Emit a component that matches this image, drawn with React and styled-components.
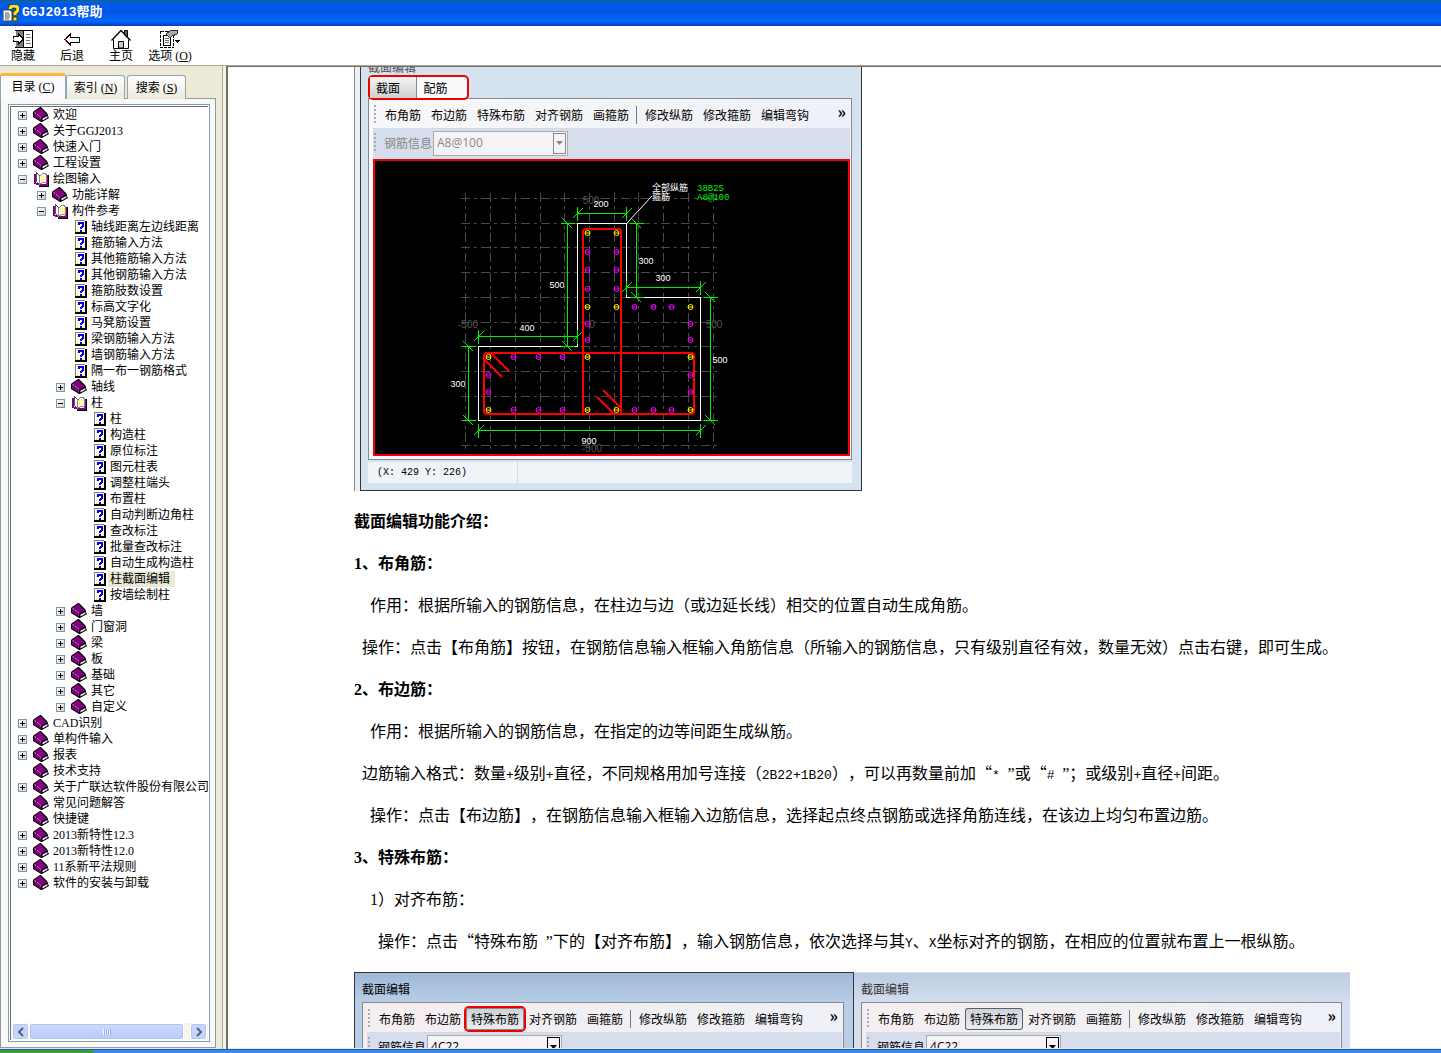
import { useId } from 'react'
import styled, { createGlobalStyle, css } from 'styled-components'

const GlobalStyle = createGlobalStyle`
  * {
    box-sizing: border-box;
  }
  body {
    margin: 0;
    background: #fff;
    color: #000;
    font-family: "Liberation Serif", "Noto Sans CJK SC", serif;
    font-size: 12px;
    line-height: 16px;
    text-spacing-trim: space-all;
  }
  button, select {
    margin: 0;
    padding: 0;
    border: none;
    background: none;
    color: inherit;
    font: inherit;
  }
  a {
    color: inherit;
    text-decoration: none;
  }
  svg {
    display: block;
    flex: none;
  }
`

/* ---------- icons ---------- */

const AppIcon = () => (
  <svg width="16" height="17" viewBox="0 0 16 17">
    <path d="M0 5h7l2 2v9H0z" fill="#fff" stroke="#444" />
    <path d="M2 8h4M2 10h5M2 12h5M2 14h4" stroke="#555" />
    <path d="M7 4q0-3 4-3t4 3q0 2-3 4v2" fill="none" stroke="#443c00" strokeWidth="5" />
    <path d="M7 4q0-3 4-3t4 3q0 2-3 4v2" fill="none" stroke="#ffe400" strokeWidth="3" />
    <rect x="10" y="12" width="4" height="4" fill="#ffe400" stroke="#443c00" />
  </svg>
)
const HideIcon = () => (
  <svg width="22" height="20" viewBox="0 0 22 20" shapeRendering="crispEdges">
    <path d="M3 1.5h17v17H3" fill="#fff" stroke="#000" />
    <path d="M4 2h7v16H4z" fill="#808080" />
    <path d="M11.500 1v18" stroke="#000" />
    <path d="M14 5.500h4M14 8.500h5M14 11.500h4M14 14.500h5" stroke="#777" />
    <path d="M1 7.500h5v-3l5.500 5.500L6 15.500v-3H1z" fill="#fff" stroke="#000" />
    <path d="M1 9h1v2H1z" fill="#00b0b0" />
  </svg>
)
const BackIcon = () => (
  <svg width="16" height="20" viewBox="0 0 16 20" shapeRendering="crispEdges">
    <path d="M1 10.500l5.500-5.500v3H15v5H6.500v3z" fill="#fff" stroke="#000" />
    <path d="M1 9h1v3H1z" fill="#e02020" />
  </svg>
)
const HomeIcon = () => (
  <svg width="20" height="20" viewBox="0 0 20 20">
    <path d="M13.500 1.500h3v7h-3z" fill="#666" stroke="#000" />
    <path d="M2.500 10.500L10 2.500l7.500 8v9h-15z" fill="#fff" />
    <path d="M2.500 10.500v9h15v-9" fill="none" stroke="#000" />
    <path d="M.5 11.500L10 1.500l9.500 10" fill="none" stroke="#000" strokeWidth="1.300" />
    <path d="M7.500 19v-6.500h5V19z" fill="#ccc" stroke="#000" />
  </svg>
)
const OptionsIcon = () => (
  <svg width="22" height="20" viewBox="0 0 22 20" shapeRendering="crispEdges">
    <path d="M1.500 2.500h13v16h-13z" fill="#fff" stroke="#000" strokeDasharray="3 1" />
    <path d="M4.500 6.500h7v10h-7z" fill="#fff" stroke="#000" />
    <path d="M6 9.500h4M6 11.500h4M6 13.500h4" stroke="#666" />
    <path d="M7 5l5-4h6v4l-5 2-2 2z" fill="#aaa" stroke="#333" />
    <path d="M16 11h5l-2.500 3z" fill="#000" />
  </svg>
)
const ClosedBook = () => (
  <svg width="17" height="16" viewBox="0 0 17 16">
    <path d="M7 0L8 0L14 6L15 8L15 9L16 11L9 15H8L0 10V5L1 4z" fill="#000" />
    <path d="M7 1L14 7.500L8.500 10.500L1 5z" fill="#800080" />
    <path d="M1 6l7 5v3L1 9.500z" fill="#800080" />
    <path d="M1.500 5.500L8.500 10.800" stroke="#e0c0e0" strokeDasharray="2 1" />
    <path d="M9.500 11.500L14.500 9V10.500L9.500 13.500z" fill="#fff" />
    <path d="M10.500 12.500l3.500-2" stroke="#999" strokeWidth=".6" />
  </svg>
)
const OpenBook = () => (
  <svg width="17" height="16" viewBox="0 0 17 16" shapeRendering="crispEdges">
    <path d="M2 3v9l5 2h7V4" fill="#fff" stroke="#800080" strokeWidth="2" />
    <path d="M3.500 1.500l3 3v9l-3-3z" fill="#fff" stroke="#555" />
    <path d="M6.500 5.500l3-3h2l2 1v8h-4l-3 2z" fill="#fff" stroke="#888" />
    <path d="M8.500 5v7M10.500 4v7M12.500 5v6" stroke="#ffee30" strokeDasharray="2 1" />
    <path d="M15.500 4v11H6" fill="none" stroke="#000" />
  </svg>
)
const TopicIcon = () => (
  <svg width="17" height="16" viewBox="-2 0 17 16" shapeRendering="crispEdges">
    <path d="M3 2h9v11H3z" fill="#fff" />
    <path d="M4.500 3v10M11.500 3v10M4 3.500h8M4 12.500h8" stroke="#ffec50" strokeDasharray="1 1" />
    <path d="M2.500 14V1.500H12" fill="none" stroke="#808080" />
    <path d="M13 2v12M2 14h12" fill="none" stroke="#000" strokeWidth="2" />
    <path d="M6 6V4h4v3L8 8.500V10" fill="none" stroke="#0000e0" strokeWidth="2" />
    <path d="M7 11h2v2H7z" fill="#0000e0" />
  </svg>
)
const Chevron = ({ flip }) => (
  <svg width="8" height="10" viewBox="0 0 8 10">
    <path
      d={flip ? 'M2 1l4 4-4 4' : 'M6 1L2 5l4 4'}
      fill="none"
      stroke="#4d6185"
      strokeWidth="2"
    />
  </svg>
)

/* ---------- section drawing ---------- */

const gridX = [465, 490, 515, 540, 564, 589, 614, 638, 663, 688, 713]
const gridY = [198, 223, 247, 272, 297, 322, 346, 371, 396, 420, 445]
const yellowBars = [
  [587, 233], [616, 233], [587, 307], [616, 307], [690, 307], [587, 357],
  [488, 357], [690, 357], [488, 410], [587, 410], [616, 410], [690, 410],
]
const magentaBars = [
  [587, 252], [616, 252], [587, 270], [616, 270], [587, 289], [616, 289],
  [634, 307], [653, 307], [671, 307], [587, 324], [690, 324], [587, 340],
  [690, 340], [513, 357], [538, 357], [562, 357], [488, 375], [690, 375],
  [488, 392], [690, 392], [513, 410], [538, 410], [562, 410], [634, 410],
  [653, 410], [671, 410],
]
const hDims = [
  { y: 213.5, from: 577.5, to: 626.5 },
  { y: 287.5, from: 626.5, to: 700.5 },
  { y: 336.5, from: 478.5, to: 577.5 },
  { y: 430.5, from: 478.5, to: 700.5 },
]
const vDims = [
  { x: 567.5, from: 223.5, to: 346.5 },
  { x: 636.5, from: 223.5, to: 297.5 },
  { x: 710.5, from: 297.5, to: 420.5 },
  { x: 468.5, from: 346.5, to: 420.5 },
]
const dimTexts = [
  [601, 207, '200'], [646, 264, '300'], [663, 281, '300'], [557, 288, '500'],
  [527, 331, '400'], [458, 387, '300'], [720, 363, '500'], [589, 444, '900'],
]
const axisTexts = [
  [591, 204, '500'], [468, 328, '-500'], [592, 328, '0'], [714, 328, '500'], [592, 452, '-500'],
]

const Rebar = ({ x, y }) => (
  <>
    <circle cx={x + 0.5} cy={y} r="2.500" />
    <path d={`M${x - 2} ${y}h5`} />
  </>
)

const SectionDrawing = () => (
  <svg width="100%" viewBox="375 161 473 293">
    <g stroke="#4a4a4a" strokeDasharray="9 4 3 4" shapeRendering="crispEdges">
      {gridX.map((x) => (
        <path key={x} d={`M${x + 0.5} 193V450`} />
      ))}
      {gridY.map((y) => (
        <path key={y} d={`M461 ${y + 0.5}H718`} />
      ))}
    </g>
    <AxisLabels>
      {axisTexts.map(([x, y, t]) => (
        <text key={`${x}-${y}`} x={x} y={y}>{t}</text>
      ))}
    </AxisLabels>
    <path
      d="M577.500 223.500H626.500V297.500H700.500V420.500H478.500V346.500H577.500z"
      fill="none"
      stroke="#fff"
      shapeRendering="crispEdges"
    />
    <g stroke="#00f000" fill="none" shapeRendering="crispEdges">
      {hDims.map(({ y, from, to }) => (
        <path
          key={y}
          d={`M${from} ${y}H${to}M${from} ${y - 7}v14M${to} ${y - 7}v14M${from - 5} ${y + 5}l10 -10M${to - 5} ${y + 5}l10 -10`}
        />
      ))}
      {vDims.map(({ x, from, to }) => (
        <path
          key={x}
          d={`M${x} ${from}V${to}M${x - 7} ${from}h14M${x - 7} ${to}h14M${x - 5} ${from - 5}l10 10M${x - 5} ${to - 5}l10 10`}
        />
      ))}
    </g>
    <g stroke="#f00" strokeWidth="2" fill="none">
      <path d="M583 414V232q0-3 3-3h32q3 0 3 3v182" />
      <rect x="484" y="353" width="210" height="61" rx="3" />
      <path d="M491 353l18 18M484 359l18 18M597 397l17 17M603 390l18 18" />
    </g>
    <g fill="#000" stroke="#ff0">
      {yellowBars.map(([x, y]) => (
        <Rebar key={`${x}-${y}`} x={x} y={y} />
      ))}
    </g>
    <g fill="#000" stroke="#f0f">
      {magentaBars.map(([x, y]) => (
        <Rebar key={`${x}-${y}`} x={x} y={y} />
      ))}
    </g>
    <path d="M627 223L652 196" stroke="#fff" />
    <DimLabels>
      {dimTexts.map(([x, y, t]) => (
        <text key={`${x}-${y}`} x={x} y={y}>{t}</text>
      ))}
    </DimLabels>
    <NoteLabels>
      <text x="652" y="191">全部纵筋</text>
      <text x="652" y="200">箍筋</text>
    </NoteLabels>
    <BarLabels>
      <text x="697" y="191">38B25</text>
      <text x="697" y="200">A8@100</text>
    </BarLabels>
  </svg>
)

/* ---------- data ---------- */

const tree = [
  [0, 'closed', '欢迎'],
  [0, 'closed', '关于GGJ2013'],
  [0, 'closed', '快速入门'],
  [0, 'closed', '工程设置'],
  [0, 'open', '绘图输入'],
  [1, 'closed', '功能详解'],
  [1, 'open', '构件参考'],
  [2, 'topic', '轴线距离左边线距离'],
  [2, 'topic', '箍筋输入方法'],
  [2, 'topic', '其他箍筋输入方法'],
  [2, 'topic', '其他钢筋输入方法'],
  [2, 'topic', '箍筋肢数设置'],
  [2, 'topic', '标高文字化'],
  [2, 'topic', '马凳筋设置'],
  [2, 'topic', '梁钢筋输入方法'],
  [2, 'topic', '墙钢筋输入方法'],
  [2, 'topic', '隔一布一钢筋格式'],
  [2, 'closed', '轴线'],
  [2, 'open', '柱'],
  [3, 'topic', '柱'],
  [3, 'topic', '构造柱'],
  [3, 'topic', '原位标注'],
  [3, 'topic', '图元柱表'],
  [3, 'topic', '调整柱端头'],
  [3, 'topic', '布置柱'],
  [3, 'topic', '自动判断边角柱'],
  [3, 'topic', '查改标注'],
  [3, 'topic', '批量查改标注'],
  [3, 'topic', '自动生成构造柱'],
  [3, 'topic', '柱截面编辑', true],
  [3, 'topic', '按墙绘制柱'],
  [2, 'closed', '墙'],
  [2, 'closed', '门窗洞'],
  [2, 'closed', '梁'],
  [2, 'closed', '板'],
  [2, 'closed', '基础'],
  [2, 'closed', '其它'],
  [2, 'closed', '自定义'],
  [0, 'closed', 'CAD识别'],
  [0, 'closed', '单构件输入'],
  [0, 'closed', '报表'],
  [0, 'leaf', '技术支持'],
  [0, 'closed', '关于广联达软件股份有限公司'],
  [0, 'leaf', '常见问题解答'],
  [0, 'leaf', '快捷键'],
  [0, 'closed', '2013新特性12.3'],
  [0, 'closed', '2013新特性12.0'],
  [0, 'closed', '11系新平法规则'],
  [0, 'closed', '软件的安装与卸载'],
]
const nodeIcons = { closed: ClosedBook, leaf: ClosedBook, open: OpenBook, topic: TopicIcon }

/* ---------- pieces ---------- */

const TreeNode = ({ level, kind, label, selected }) => {
  const Icon = nodeIcons[kind]
  const expandable = kind === 'closed' || kind === 'open'

  return (
    <TreeRow $level={level}>
      {expandable ? (
        <Expander type="button" aria-label={label} aria-expanded={kind === 'open'}>
          <svg width="7" height="7" viewBox="0 0 7 7" shapeRendering="crispEdges">
            <path d={kind === 'open' ? 'M1 3.500h5' : 'M1 3.500h5M3.500 1v5'} stroke="#000" />
          </svg>
        </Expander>
      ) : (
        <ExpanderGap />
      )}
      <Icon />
      <TreeLink href="#" $selected={selected}>{label}</TreeLink>
    </TreeRow>
  )
}

const EditToolbar = ({ pressed, marked, disabled, info }) => {
  const id = useId()

  return (
    <>
      <ToolRow>
        <Grip />
        <ToolButton type="button">布角筋</ToolButton>
        <ToolButton type="button">布边筋</ToolButton>
        <ToolButton type="button" $pressed={pressed} $marked={marked}>特殊布筋</ToolButton>
        <ToolButton type="button">对齐钢筋</ToolButton>
        <ToolButton type="button">画箍筋</ToolButton>
        <Divider />
        <ToolButton type="button">修改纵筋</ToolButton>
        <ToolButton type="button">修改箍筋</ToolButton>
        <ToolButton type="button">编辑弯钩</ToolButton>
        <MoreButton type="button">»</MoreButton>
      </ToolRow>
      <InfoRow $disabled={disabled}>
        <Grip />
        <InfoLabel htmlFor={id}>钢筋信息</InfoLabel>
        <Combo>
          <ComboSelect id={id} disabled={disabled}>
            <option>{info}</option>
          </ComboSelect>
          <ComboArrow>
            <svg width="7" height="4" viewBox="0 0 7 4">
              <path d="M0 0h7L3.500 4z" fill="currentColor" />
            </svg>
          </ComboArrow>
        </Combo>
      </InfoRow>
    </>
  )
}

const App = () => (
  <>
    <GlobalStyle />
    <Shell>
      <TitleBar>
        <AppIcon />
        <Title>GGJ2013帮助</Title>
      </TitleBar>
      <Toolbar>
        <BarButton type="button"><HideIcon />隐藏</BarButton>
        <BarButton type="button"><BackIcon />后退</BarButton>
        <BarButton type="button"><HomeIcon />主页</BarButton>
        <BarButton type="button"><OptionsIcon /><span>选项 (<u>O</u>)</span></BarButton>
      </Toolbar>
      <Main>
        <Sidebar>
          <Tabs role="tablist">
            <Tab type="button" role="tab" aria-selected="true" $active><span>目录 (<u>C</u>)</span></Tab>
            <Tab type="button" role="tab"><span>索引 (<u>N</u>)</span></Tab>
            <Tab type="button" role="tab"><span>搜索 (<u>S</u>)</span></Tab>
          </Tabs>
          <TabPage>
            <TreeBox>
              <Tree>
                {tree.map(([level, kind, label, selected], i) => (
                  <TreeNode key={i} level={level} kind={kind} label={label} selected={selected} />
                ))}
              </Tree>
              <ScrollBar>
                <ScrollButton type="button" aria-label="向左"><Chevron /></ScrollButton>
                <ScrollThumb />
                <ScrollButton type="button" aria-label="向右"><Chevron flip /></ScrollButton>
              </ScrollBar>
            </TreeBox>
          </TabPage>
        </Sidebar>
        <Splitter />
        <Document>
          <Figure>
            <EditorWindow>
              <CutTitle>截面编辑</CutTitle>
              <SectionTabs>
                <SectionTab type="button">截面</SectionTab>
                <SectionTab type="button" $active>配筋</SectionTab>
              </SectionTabs>
              <Panel>
                <EditToolbar disabled info="A8@100" />
                <Canvas><SectionDrawing /></Canvas>
              </Panel>
              <StatusBar>
                <Coords>(X: 429 Y: 226)</Coords>
              </StatusBar>
            </EditorWindow>
          </Figure>
          <Heading>截面编辑功能介绍：</Heading>
          <Heading><Digit>1</Digit>、布角筋：</Heading>
          <Para $indent={16}>作用：根据所输入的钢筋信息，在柱边与边（或边延长线）相交的位置自动生成角筋。</Para>
          <Para $indent={8}>操作：点击【布角筋】按钮，在钢筋信息输入框输入角筋信息（所输入的钢筋信息，只有级别直径有效，数量无效）点击右键，即可生成。</Para>
          <Heading><Digit>2</Digit>、布边筋：</Heading>
          <Para $indent={16}>作用：根据所输入的钢筋信息，在指定的边等间距生成纵筋。</Para>
          <Para $indent={8}>
            边筋输入格式：数量<Half>+</Half>级别<Half>+</Half>直径，不同规格用加号连接（<Half>2B22+1B20</Half>），可以再数量前加“<Half>* </Half><Digit>”</Digit>或“<Half># </Half><Digit>”</Digit>；或级别<Half>+</Half>直径<Half>+</Half>间距。
          </Para>
          <Para $indent={16}>操作：点击【布边筋】，在钢筋信息输入框输入边筋信息，选择起点终点钢筋或选择角筋连线，在该边上均匀布置边筋。</Para>
          <Heading><Digit>3</Digit>、特殊布筋：</Heading>
          <Para $indent={16}><Digit>1</Digit>）对齐布筋：</Para>
          <Para $indent={24}>
            操作：点击“特殊布筋<Half> </Half><Digit>”</Digit>下的【对齐布筋】，输入钢筋信息，依次选择与其<Half>Y</Half>、<Half>X</Half>坐标对齐的钢筋，在相应的位置就布置上一根纵筋。
          </Para>
          <Gallery>
            <ShotWindow $active>
              <ShotTitle>截面编辑</ShotTitle>
              <Panel $open>
                <EditToolbar pressed marked info="4C22" />
              </Panel>
            </ShotWindow>
            <ShotWindow>
              <ShotTitle>截面编辑</ShotTitle>
              <Panel $open>
                <EditToolbar pressed info="4C22" />
              </Panel>
            </ShotWindow>
          </Gallery>
        </Document>
      </Main>
      <TaskStrip><StartEdge /></TaskStrip>
    </Shell>
  </>
)
export default App

/* ---------- shell ---------- */

const Shell = styled.div`
  height: 100vh;
  display: flex;
  flex-direction: column;
  overflow: hidden;
  background: #ece9d8;
`
const TitleBar = styled.header`
  flex: none;
  height: 26px;
  padding: 0 3px;
  display: flex;
  align-items: center;
  gap: 3px;
  background: linear-gradient(#086090 0, #0a62c0 2px, #0058ee 4px, #0055e5 12px, #0468fc 21px, #0450d8 24px, #003cb4 26px);
`
const Title = styled.h1`
  margin: 0;
  color: #fff;
  font-family: "Liberation Mono", "Noto Sans CJK SC", monospace;
  font-size: 13px;
  font-weight: bold;
`
const Toolbar = styled.nav`
  flex: none;
  height: 40px;
  display: flex;
  gap: 3px;
  background: #fff;
  border-bottom: 1px solid #aca899;
`
const BarButton = styled.button`
  width: 46px;
  padding-top: 3px;
  display: flex;
  flex-direction: column;
  align-items: center;
  white-space: nowrap;
  line-height: 15px;
`
const Main = styled.main`
  flex: 1;
  min-height: 0;
  display: flex;
`

/* ---------- sidebar ---------- */

const Sidebar = styled.aside`
  flex: none;
  width: 222px;
  padding: 7px 6px 1px 0;
  display: flex;
  flex-direction: column;
`
const Tabs = styled.div`
  height: 26px;
  display: flex;
  align-items: flex-end;
  gap: 2px;
  position: relative;
  z-index: 1;
`
const Tab = styled.button`
  width: 59px;
  height: 24px;
  border: 1px solid #91a7b4;
  border-bottom: none;
  border-radius: 3px 3px 0 0;
  background: linear-gradient(#fff, #ece9dc);
  ${(props) =>
    props.$active &&
    css`
      width: 66px;
      height: 26px;
      margin-right: -2px;
      padding-bottom: 2px;
      border-top: 3px solid #ffb83c;
      background: #fcfcfe;
    `}
`
const TabPage = styled.div`
  flex: 1;
  min-height: 0;
  margin-top: -1px;
  padding: 5px 5px 5px 7px;
  display: flex;
  border: 1px solid #919b9c;
  background: #f8f8f6;
`
const TreeBox = styled.div`
  flex: 1;
  min-width: 0;
  padding: 1px;
  display: flex;
  flex-direction: column;
  border: 1px solid #7f9db9;
  background: #fff;
`
const Tree = styled.ul`
  flex: 1;
  min-height: 0;
  margin: 0;
  padding: 0;
  overflow: hidden;
  list-style: none;
  border-top: 1px solid #716f64;
  border-left: 1px solid #716f64;
`
const TreeRow = styled.li`
  height: 16px;
  padding-left: ${(props) => 7 + props.$level * 19}px;
  display: flex;
  align-items: center;
  white-space: nowrap;
`
const Expander = styled.button`
  flex: none;
  width: 9px;
  height: 9px;
  margin-right: 6px;
  border: 1px solid #7898b5;
  background: linear-gradient(135deg, #fff, #d0ccc0);
`
const ExpanderGap = styled.span`
  flex: none;
  width: 9px;
  margin-right: 6px;
`
const TreeLink = styled.a`
  height: 16px;
  margin-left: 1px;
  padding: 0 5px 0 2px;
  background: ${(props) => (props.$selected ? '#ece9d8' : 'transparent')};
`
const ScrollBar = styled.div`
  flex: none;
  height: 17px;
  padding: 0 1px;
  display: flex;
  border-left: 1px solid #716f64;
  background: #f6f5f0;
`
const ScrollButton = styled.button`
  width: 17px;
  display: flex;
  align-items: center;
  justify-content: center;
  border: 1px solid #fff;
  border-radius: 3px;
  background: #c6d5fd;
  box-shadow: inset 0 0 0 1px #b4c8f6;
`
const ScrollThumb = styled.div`
  flex: 1;
  margin-right: 6px;
  border: 1px solid #fff;
  border-radius: 3px;
  box-shadow: inset 0 0 0 1px #b0c4f4;
  background:
    repeating-linear-gradient(90deg, #eef4fe 0 1px, #8cb0f8 1px 2px) center / 8px 6px no-repeat,
    linear-gradient(#ccd9ff, #bacbfa);
`
const Splitter = styled.div`
  flex: none;
  width: 6px;
  border-left: 1px solid #aca899;
  border-right: 2px solid #716f64;
  background: #f4f2e8;
`

/* ---------- document ---------- */

const Document = styled.article`
  flex: 1;
  min-width: 0;
  padding-left: 126px;
  margin-bottom: 1px;
  overflow: hidden;
  background: #fff;
  border-top: 1px solid #716f64;
  font-family: "Noto Sans CJK SC", sans-serif;
`
const Heading = styled.h2`
  margin: 0 0 21px;
  font-size: 16px;
  font-weight: bold;
  line-height: 21px;
`
const Para = styled.p`
  margin: 0 0 21px;
  padding-left: ${(props) => props.$indent}px;
  font-size: 16px;
  line-height: 21px;
  white-space: nowrap;
`
// zero line height keeps the second font from stretching the line
const Digit = styled.span`
  font-family: "Liberation Serif", serif;
  line-height: 0;
`
const Half = styled.span`
  font-family: "Liberation Mono", monospace;
  font-size: 13px;
  line-height: 0;
`
const Figure = styled.figure`
  width: 508px;
  margin: 0 0 19px;
  padding-left: 5px;
  border-left: 1px solid #84898f;
  background: #eef0f2;
`
const EditorWindow = styled.div`
  padding: 0 9px 7px 7px;
  border: 1px solid #30363c;
  border-top: none;
  background: #d5e2ef;
`
const CutTitle = styled.div`
  height: 8px;
  display: flex;
  align-items: flex-end;
  overflow: hidden;
  color: #555;
`
const SectionTabs = styled.div`
  position: relative;
  width: 101px;
  height: 25px;
  margin-bottom: -2px;
  display: flex;
  border: 2px solid #f00000;
  border-radius: 5px;
  background: #f6f8fa;
`
const SectionTab = styled.button`
  width: 47px;
  padding-right: 10px;
  border-right: 1px solid #888;
  background: linear-gradient(#f4f4f4, #d0d0d2);
  ${(props) =>
    props.$active &&
    css`
      border: none;
      background: #fafafc;
    `}
`
const Panel = styled.div`
  padding: 0 1px 3px 4px;
  border: 1px solid #85888c;
  background: #f8f8fa;
  color: #000;
  ${(props) =>
    props.$open &&
    css`
      background: #f5eef1;
    `}
`
const ToolRow = styled.div`
  height: 30px;
  padding: 2px 0 0 1px;
  display: flex;
  align-items: center;
  background: linear-gradient(90deg, transparent, #eef1f7);
  border-bottom: 1px solid #d2dbe4;
`
const Grip = styled.span`
  width: 2px;
  height: 20px;
  margin-right: 4px;
  background: repeating-linear-gradient(#a4acba 0 2px, transparent 2px 4px);
`
const ToolButton = styled.button`
  height: 22px;
  padding: 0 5px;
  white-space: nowrap;
  ${(props) =>
    props.$pressed &&
    css`
      border-radius: 3px;
      background: linear-gradient(#cdd0d5, #eceef2);
      box-shadow: inset 0 0 0 1px #56606a;
    `}
  ${(props) =>
    props.$marked &&
    css`
      box-shadow: inset 0 0 0 1px #888, 0 0 0 2px #f00000;
    `}
`
const Divider = styled.span`
  width: 1px;
  height: 18px;
  margin: 0 3px 0 2px;
  background: #777;
`
const MoreButton = styled.button`
  margin: 0 4px 8px auto;
  font-size: 16px;
  font-weight: bold;
`
const InfoRow = styled.div`
  height: 30px;
  padding: 0 0 2px 1px;
  display: flex;
  align-items: center;
  color: ${(props) => (props.$disabled ? '#888' : '#000')};
  background: #d6deee;
`
const InfoLabel = styled.label`
  margin-left: 4px;
`
const Combo = styled.span`
  position: relative;
  width: 135px;
  height: 25px;
  margin-left: 1px;
`
const ComboSelect = styled.select`
  appearance: none;
  width: 100%;
  height: 100%;
  padding: 0 3px;
  border: 1px solid #a8acb0;
  background: #f6f3f6;
  color: inherit;
  opacity: 1;
  font-family: "Open Sans", "Noto Sans CJK SC", sans-serif;
`
const ComboArrow = styled.span`
  position: absolute;
  top: 2px;
  right: 2px;
  bottom: 2px;
  width: 13px;
  display: flex;
  align-items: center;
  justify-content: center;
  border: 1px solid currentColor;
  pointer-events: none;
`
const Canvas = styled.div`
  border: 2px solid #f00000;
  background: #000;
`
const StatusBar = styled.div`
  height: 21px;
  margin-top: 2px;
  display: flex;
  background: #f0f3f7;
`
const Coords = styled.span`
  width: 150px;
  padding-left: 9px;
  border-right: 1px solid #e4d8cc;
  font-family: "Liberation Mono", monospace;
  font-size: 10px;
  line-height: 21px;
`
const Gallery = styled.div`
  display: flex;
`
const ShotWindow = styled.div`
  flex: none;
  width: 496px;
  padding: 0 8px 0 7px;
  border-top: 1px solid #d8e0ec;
  background: linear-gradient(#bccce2, #d4deee 30px);
  color: #333;
  ${(props) =>
    props.$active &&
    css`
      width: 500px;
      padding: 0 9px 0 7px;
      border: 1px solid #30363c;
      background: linear-gradient(#a0b8d8, #b8cee6 30px);
      color: #000;
    `}
`
const ShotTitle = styled.div`
  height: 29px;
  padding-top: 8px;
`
const DimLabels = styled.g`
  fill: #fff;
  font-family: "Liberation Sans", sans-serif;
  font-size: 9px;
  text-anchor: middle;
`
const AxisLabels = styled(DimLabels)`
  fill: #555;
  font-size: 10px;
`
const NoteLabels = styled.g`
  fill: #fff;
  font-family: "Noto Sans CJK SC", sans-serif;
  font-size: 9px;
`
const BarLabels = styled.g`
  fill: #00f000;
  font-family: "Liberation Mono", monospace;
  font-size: 9px;
`

/* ---------- taskbar edge ---------- */

const TaskStrip = styled.footer`
  flex: none;
  height: 4px;
  border-top: 1px solid #1c58c8;
  background: #3c88ec;
`
const StartEdge = styled.div`
  width: 94px;
  height: 3px;
  border-radius: 0 3px 0 0;
  background: #3c9a3c;
`
